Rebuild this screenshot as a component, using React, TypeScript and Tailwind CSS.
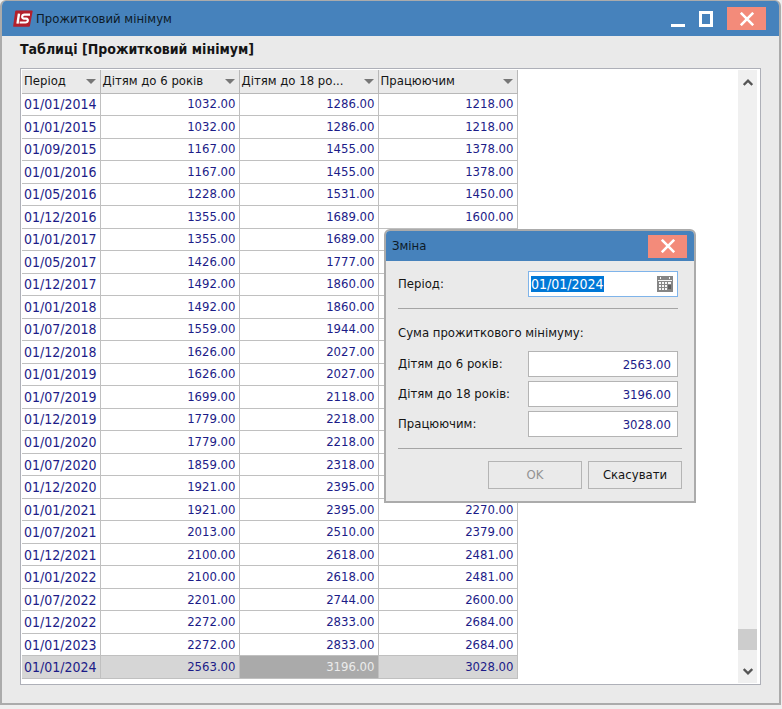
import { useEffect, useRef, useState } from "react";

type Row = {
  period: string;
  under6: string;
  under18: string;
  working: string;
};

const columns = ["Період", "Дітям до 6 років", "Дітям до 18 ро...", "Працюючим"];

const rows: Row[] = [
  { period: "01/01/2014", under6: "1032.00", under18: "1286.00", working: "1218.00" },
  { period: "01/01/2015", under6: "1032.00", under18: "1286.00", working: "1218.00" },
  { period: "01/09/2015", under6: "1167.00", under18: "1455.00", working: "1378.00" },
  { period: "01/01/2016", under6: "1167.00", under18: "1455.00", working: "1378.00" },
  { period: "01/05/2016", under6: "1228.00", under18: "1531.00", working: "1450.00" },
  { period: "01/12/2016", under6: "1355.00", under18: "1689.00", working: "1600.00" },
  { period: "01/01/2017", under6: "1355.00", under18: "1689.00", working: "1600.00" },
  { period: "01/05/2017", under6: "1426.00", under18: "1777.00", working: "1684.00" },
  { period: "01/12/2017", under6: "1492.00", under18: "1860.00", working: "1762.00" },
  { period: "01/01/2018", under6: "1492.00", under18: "1860.00", working: "1762.00" },
  { period: "01/07/2018", under6: "1559.00", under18: "1944.00", working: "1841.00" },
  { period: "01/12/2018", under6: "1626.00", under18: "2027.00", working: "1921.00" },
  { period: "01/01/2019", under6: "1626.00", under18: "2027.00", working: "1921.00" },
  { period: "01/07/2019", under6: "1699.00", under18: "2118.00", working: "2007.00" },
  { period: "01/12/2019", under6: "1779.00", under18: "2218.00", working: "2102.00" },
  { period: "01/01/2020", under6: "1779.00", under18: "2218.00", working: "2102.00" },
  { period: "01/07/2020", under6: "1859.00", under18: "2318.00", working: "2197.00" },
  { period: "01/12/2020", under6: "1921.00", under18: "2395.00", working: "2270.00" },
  { period: "01/01/2021", under6: "1921.00", under18: "2395.00", working: "2270.00" },
  { period: "01/07/2021", under6: "2013.00", under18: "2510.00", working: "2379.00" },
  { period: "01/12/2021", under6: "2100.00", under18: "2618.00", working: "2481.00" },
  { period: "01/01/2022", under6: "2100.00", under18: "2618.00", working: "2481.00" },
  { period: "01/07/2022", under6: "2201.00", under18: "2744.00", working: "2600.00" },
  { period: "01/12/2022", under6: "2272.00", under18: "2833.00", working: "2684.00" },
  { period: "01/01/2023", under6: "2272.00", under18: "2833.00", working: "2684.00" },
  { period: "01/01/2024", under6: "2563.00", under18: "3196.00", working: "3028.00" }
];

function CloseButton() {
  return (
    <button aria-label="Закрити" className="flex h-[23px] w-[39px] items-center justify-center bg-[#f38b7a]" type="button">
      <svg className="h-[14px] w-[14px]" fill="none" stroke="white" strokeWidth="2.6" viewBox="0 0 14 14">
        <path d="M0.8 0.8 13.2 13.2M13.2 0.8 0.8 13.2" />
      </svg>
    </button>
  );
}

function AppLogo() {
  return (
    <svg aria-hidden="true" className="h-[18px] w-5" viewBox="0 0 20 18">
      <path d="M3.2 0.5h15.6a.8.8 0 0 1 .8 1L17 15.7a1.2 1.2 0 0 1-1.2 1H.9a.7.7 0 0 1-.7-.9L2.2 1.3a1 1 0 0 1 1-.8z" fill="#b3202c" />
      <path d="M6 3.600 4.500 13.600" fill="none" stroke="white" strokeWidth="2.4" />
      <path d="M17 4.700h-5.600c-2.700 0-3 3.700-.6 3.900h2.400c2.600.2 2 3.900-.7 3.900H6.600" fill="none" stroke="white" strokeWidth="2.2" />
    </svg>
  );
}

function CalendarIcon() {
  return (
    <svg aria-hidden="true" className="h-4 w-4" viewBox="0 0 16 16">
      <path d="M0 0h16v16H0z" fill="#858585" />
      <path d="M3 1h1v2H3zM12 1h1v2h-1z" fill="#f4f4f4" />
      <path d="M1 4h14v1H1z" fill="#f4f4f4" />
      <path
        d="M2 6h2v2H2zM5 6h2v2H5zM8 6h2v2H8zM11 6h3v2h-3zM2 9h2v2H2zM5 9h2v2H5zM8 9h2v2H8zM2 12h2v2H2zM5 12h2v2H5zM8 12h2v2H8z"
        fill="#f4f4f4"
      />
      <path d="M11 9h3v4h-3z" fill="#5c5c5c" />
    </svg>
  );
}

function ScrollBar() {
  return (
    <div className="flex w-[19px] flex-col items-center bg-[#f0f0f0] text-[#555]">
      <button aria-label="Вгору" className="flex h-6 w-full items-center justify-center" type="button">
        <svg className="h-[7px] w-[10px]" fill="none" stroke="currentColor" strokeWidth="2.4" viewBox="0 0 10 7">
          <path d="M0.700 6 5 1.700 9.300 6" />
        </svg>
      </button>
      <div className="grow" />
      <div className="h-[21px] w-full bg-[#cdcdcd]" />
      <div className="h-[9px]" />
      <button aria-label="Вниз" className="flex h-6 w-full items-center justify-center" type="button">
        <svg className="h-[7px] w-[10px]" fill="none" stroke="currentColor" strokeWidth="2.4" viewBox="0 0 10 7">
          <path d="M0.700 1 5 5.300 9.300 1" />
        </svg>
      </button>
    </div>
  );
}

function AmountField({ id, label, initial }: { id: string; label: string; initial: string }) {
  const [value, setValue] = useState(initial);

  return (
    <div className="flex items-center justify-between">
      <label htmlFor={id}>{label}</label>
      <input
        className="h-[26px] w-[150px] border border-[#b4b4b4] bg-white px-[6px] text-right text-[#1c1c88] outline-none"
        id={id}
        onChange={(event) => setValue(event.target.value)}
        value={value}
      />
    </div>
  );
}

function EditDialog() {
  const [period, setPeriod] = useState("01/01/2024");
  const periodRef = useRef<HTMLInputElement>(null);

  useEffect(() => {
    periodRef.current?.focus();
    periodRef.current?.select();
  }, []);

  return (
    <section
      aria-labelledby="dialog-title"
      className="absolute top-[229px] left-[384px] w-[312px] overflow-hidden rounded-t-md border-2 border-[#ababab] bg-[#eaeaea]"
      role="dialog"
    >
      <header className="flex h-[30px] items-center justify-between bg-[#4682bc] pr-[7px] pl-[6px] text-[#0d1a28]">
        <h2 id="dialog-title">Зміна</h2>
        <CloseButton />
      </header>
      <form className="px-3 pt-[10px] pb-3" onSubmit={(event) => event.preventDefault()}>
        <div className="mr-1">
          <div className="flex items-center justify-between">
            <label htmlFor="period">Період:</label>
            <div className="flex h-[26px] w-[150px] items-center border border-[#7fb4ea] bg-white pr-1 pl-[2px]">
              <input
                className="w-full min-w-0 text-[14px] leading-4 text-[#1c1c88] outline-none selection:bg-[#0078d7] selection:text-white"
                id="period"
                onChange={(event) => setPeriod(event.target.value)}
                ref={periodRef}
                value={period}
              />
              <button aria-label="Календар" type="button">
                <CalendarIcon />
              </button>
            </div>
          </div>
          <hr className="mt-[11px] border-[#a5a5a5]" />
          <p className="mt-4 mb-[10px]">Сума прожиткового мінімуму:</p>
          <div className="grid gap-1">
            <AmountField id="under6" initial="2563.00" label="Дітям до 6 років:" />
            <AmountField id="under18" initial="3196.00" label="Дітям до 18 років:" />
            <AmountField id="working" initial="3028.00" label="Працюючим:" />
          </div>
        </div>
        <hr className="mt-[11px] border-[#a5a5a5]" />
        <div className="mt-3 flex justify-end gap-[6px]">
          <button className="h-7 w-[94px] border border-[#b4b4b4] text-[#929292]" disabled type="submit">
            OK
          </button>
          <button className="h-7 w-[94px] border border-[#b4b4b4]" type="button">
            Скасувати
          </button>
        </div>
      </form>
    </section>
  );
}

export default function App() {
  return (
    <div className="relative min-h-screen bg-[#efefef] pr-px pb-[5px] font-['DejaVu_Sans_Condensed','DejaVu_Sans',sans-serif] text-[13px] leading-4 text-[#151515]">
      <main className="overflow-hidden rounded-t-md border-2 border-t border-[#ababab] bg-[#eaeaea]">
        <header className="flex h-[35px] items-center bg-[#4682bc] pr-[13px] pl-[11px] text-[#0d1a28]">
          <AppLogo />
          <h1 className="ml-[3px] grow">Прожитковий мінімум</h1>
          <button aria-label="Згорнути" className="flex h-4 w-[14px] items-end" type="button">
            <span className="h-[3px] w-full bg-white" />
          </button>
          <button aria-label="Розгорнути" className="mx-[14px] h-4 w-[14px] border-[3px] border-white" type="button" />
          <CloseButton />
        </header>
        <div className="px-[18px] pb-[18px]">
          <h2 className="pt-[5px] pb-[11px] text-[14px] leading-4 font-bold">Таблиці [Прожитковий мінімум]</h2>
          <div className="flex justify-between border border-[#aeb0b8] bg-white p-px pr-[3px]">
            <table className="mb-1 h-[609px] w-[495px] table-fixed border-collapse">
              <colgroup>
                <col className="w-[78px]" />
                <col className="w-[139px]" />
                <col className="w-[139px]" />
                <col className="w-[139px]" />
              </colgroup>
              <thead>
                <tr className="bg-[#eaeaea]">
                  {columns.map((column) => (
                    <th className="h-[23px] border-r border-b border-[#b8b8b8] p-0 pr-1 pl-[2px] font-normal" key={column}>
                      <div className="flex items-center justify-between whitespace-nowrap">
                        {column}
                        <svg aria-hidden="true" className="h-[5px] w-[10px] shrink-0" viewBox="0 0 10 5">
                          <path d="M0 0h10L5 5z" fill="#777" />
                        </svg>
                      </div>
                    </th>
                  ))}
                </tr>
              </thead>
              <tbody className="text-right text-[#1c1c88]">
                {rows.map((row, index) => {
                  const selected = index === rows.length - 1;

                  return (
                    <tr className={selected ? "bg-[#d6d6d6]" : ""} key={row.period}>
                      <td className="border-r border-b border-[#c0c0c0] p-0 pl-[2px] text-left text-[14px] leading-4">{row.period}</td>
                      <td className="border-r border-b border-[#c0c0c0] p-0 pr-[3px]">{row.under6}</td>
                      <td className={selected ? "border-r border-b border-[#c0c0c0] bg-[#aaaaaa] p-0 pr-[3px] text-[#ececec]" : "border-r border-b border-[#c0c0c0] p-0 pr-[3px]"}>
                        {row.under18}
                      </td>
                      <td className="border-r border-b border-[#c0c0c0] p-0 pr-[3px]">{row.working}</td>
                    </tr>
                  );
                })}
              </tbody>
            </table>
            <ScrollBar />
          </div>
        </div>
      </main>
      <EditDialog />
    </div>
  );
}
